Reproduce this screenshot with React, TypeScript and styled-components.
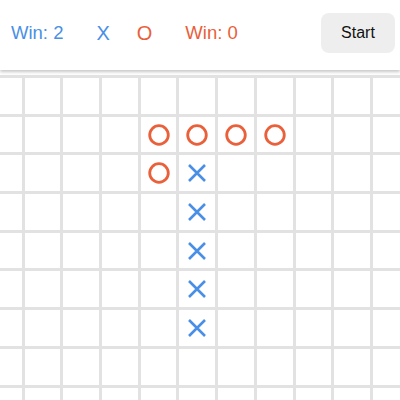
import React from 'react';
import styled, { createGlobalStyle } from 'styled-components';

type Piece = 'x' | 'o' | null;

const COLS = 11;
const ROWS = 9;

const BLUE = '#4a8fe6';
const ORANGE = '#e9603a';

// placed stones, keyed "row,col"
const moves: Record<string, Piece> = {
  '1,4': 'o',
  '1,5': 'o',
  '1,6': 'o',
  '1,7': 'o',
  '2,4': 'o',
  '2,5': 'x',
  '3,5': 'x',
  '4,5': 'x',
  '5,5': 'x',
  '6,5': 'x',
};

const GlobalStyle = createGlobalStyle`
  html, body {
    margin: 0;
    padding: 0;
    background: #ffffff;
    overflow: hidden;
  }
  body {
    font-family: "Liberation Sans", Arial, Helvetica, sans-serif;
  }
`;

const Page = styled.div`
  width: 400px;
  height: 400px;
  display: flex;
  flex-direction: column;
  overflow: hidden;
  position: relative;
`;

const Header = styled.header`
  position: relative;
  z-index: 2;
  flex: 0 0 70px;
  display: flex;
  align-items: center;
  justify-content: space-between;
  padding: 0 5px 0 11px;
  background: #ffffff;
  box-shadow: 0 2px 3px rgba(0, 0, 0, 0.22);
`;

const Scores = styled.div`
  display: flex;
  align-items: center;
  gap: 33px;
  margin-top: -4px;
`;

const ScoreText = styled.span<{ $color: string }>`
  font-size: 18.5px;
  color: ${(p) => p.$color};
`;

const Marks = styled.div`
  display: flex;
  align-items: center;
  gap: 27px;
`;

const Mark = styled.span<{ $color: string }>`
  font-size: 20px;
  color: ${(p) => p.$color};
`;

const StartButton = styled.button`
  width: 74px;
  height: 40px;
  margin-top: -4px;
  border: none;
  border-radius: 8px;
  background: #eeeeee;
  color: #111111;
  font-family: inherit;
  font-size: 16px;
  cursor: pointer;
`;

const BoardArea = styled.div`
  flex: 1;
  overflow: hidden;
  margin-top: -5px;
`;

const Board = styled.div`
  display: grid;
  grid-template-columns: repeat(${COLS}, 35.7px);
  grid-auto-rows: 35.7px;
  gap: 3px;
  padding: 3px;
  margin: 10px 0 0 -17px;
  width: max-content;
  background: #e2e2e2;
`;

const Cell = styled.div`
  background: #ffffff;
  display: flex;
  align-items: center;
  justify-content: center;
`;

const Stone: React.FC<{ piece: Piece }> = ({ piece }) => {
  if (piece === 'o') {
    return (
      <svg width="22" height="22" viewBox="0 0 22 22">
        <circle cx="11" cy="11" r="9.3" fill="none" stroke={ORANGE} strokeWidth="2.8" />
      </svg>
    );
  }
  if (piece === 'x') {
    return (
      <svg width="20" height="20" viewBox="0 0 20 20">
        <path d="M2 2 L18 18 M18 2 L2 18" stroke={BLUE} strokeWidth="2.6" strokeLinecap="butt" />
      </svg>
    );
  }
  return null;
};

const App: React.FC = () => {
  const cells = [];
  for (let r = 0; r < ROWS; r++) {
    for (let c = 0; c < COLS; c++) {
      cells.push(
        <Cell key={`${r}-${c}`}>
          <Stone piece={moves[`${r},${c}`] ?? null} />
        </Cell>
      );
    }
  }

  return (
    <Page>
      <GlobalStyle />
      <Header>
        <Scores>
          <ScoreText $color={BLUE}>Win: 2</ScoreText>
          <Marks>
            <Mark $color={BLUE}>X</Mark>
            <Mark $color={ORANGE}>O</Mark>
          </Marks>
          <ScoreText $color={ORANGE}>Win: 0</ScoreText>
        </Scores>
        <StartButton>Start</StartButton>
      </Header>
      <BoardArea>
        <Board>{cells}</Board>
      </BoardArea>
    </Page>
  );
};

export default App;
